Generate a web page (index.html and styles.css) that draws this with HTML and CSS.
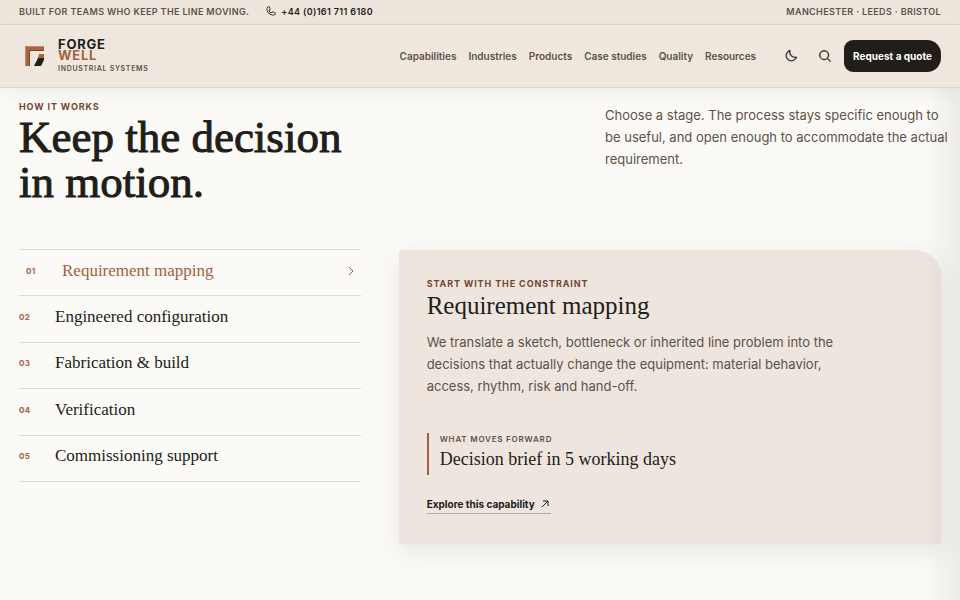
FILE: index.html
```
<!DOCTYPE html>
<html lang="en">
<head>
    <meta charset="UTF-8">
    <meta name="viewport" content="width=device-width, initial-scale=1">
    <title>Forgewell Industrial Systems</title>
    <link rel="stylesheet" href="styles.css">
</head>
<body>
<div class="topbar">
    <div class="topbar-left">
        <span>Built for teams who keep the line moving.</span>
        <a class="phone" href="tel:+441617116180">
            <svg width="12" height="12" viewBox="0 0 256 256" fill="currentColor" aria-hidden="true"><path d="M222.37,158.46l-47.11-21.11-.13-.06a16,16,0,0,0-15.17,1.4,8.12,8.12,0,0,0-.75.56L134.87,160c-15.42-7.49-31.34-23.29-38.83-38.51l20.78-24.71c.2-.25.39-.5.57-.77a16,16,0,0,0,1.32-15.06l0-.12L97.54,33.64a16,16,0,0,0-16.62-9.52A56.26,56.26,0,0,0,32,80c0,79.4,64.6,144,144,144a56.26,56.26,0,0,0,55.88-48.92A16,16,0,0,0,222.37,158.46ZM176,208A128.14,128.14,0,0,1,48,80,40.2,40.2,0,0,1,82.87,40a.61.61,0,0,0,0,.12l21,47L83.2,111.86a6.13,6.13,0,0,0-.57.77,16,16,0,0,0-1,15.7c9.06,18.53,27.73,37.06,46.46,46.11a16,16,0,0,0,15.75-1.14,8.44,8.44,0,0,0,.74-.56L168.89,152l47,21.05h0s.08,0,.11,0A40.21,40.21,0,0,1,176,208Z"/></svg>
            +44 (0)161 711 6180
        </a>
    </div>
    <span>Manchester · Leeds · Bristol</span>
</div>

<header class="header">
    <a class="brand" href="#">
        <svg class="brand-mark" width="20" height="20" viewBox="0 0 20 20" aria-hidden="true">
            <path fill="#a9633f" d="M0 0H19V5H5V20H0Z"/>
            <path fill="#c58b68" d="M0 0H19V1H1V20H0Z"/>
            <path fill="#7d4830" d="M4 4H19V5H5V20H4Z"/>
            <path fill="#a9633f" d="M14 8H19V12H13Z"/>
            <path fill="#231f19" d="M13 12H19V14L16 20H9Z"/>
        </svg>
        <span class="brand-text">
            <span class="brand-name">FORGE</span>
            <span class="brand-name accent">WELL</span>
            <span class="brand-sub">Industrial systems</span>
        </span>
    </a>
    <nav class="nav">
        <a href="#">Capabilities</a>
        <a href="#">Industries</a>
        <a href="#">Products</a>
        <a href="#">Case studies</a>
        <a href="#">Quality</a>
        <a href="#">Resources</a>
    </nav>
    <div class="actions">
        <button class="icon-btn" type="button" aria-label="Dark mode">
            <svg width="14" height="14" viewBox="0 0 256 256" fill="currentColor" stroke="currentColor" stroke-width="6"><path d="M233.54,142.23a8,8,0,0,0-8-2,88.08,88.08,0,0,1-109.8-109.8,8,8,0,0,0-10-10,104.84,104.84,0,0,0-52.91,37A104,104,0,0,0,136,224a103.09,103.09,0,0,0,62.52-20.88,104.84,104.84,0,0,0,37-52.91A8,8,0,0,0,233.54,142.23ZM188.9,190.34A88,88,0,0,1,65.66,67.11a89,89,0,0,1,31.4-26A106,106,0,0,0,96,56,104.11,104.11,0,0,0,200,160a106,106,0,0,0,14.92-1.06A89,89,0,0,1,188.9,190.34Z"/></svg>
        </button>
        <button class="icon-btn" type="button" aria-label="Search">
            <svg width="14" height="14" viewBox="0 0 256 256" fill="currentColor" stroke="currentColor" stroke-width="6"><path d="M229.66,218.34l-50.07-50.06a88.11,88.11,0,1,0-11.31,11.31l50.06,50.07a8,8,0,0,0,11.32-11.32ZM40,112a72,72,0,1,1,72,72A72.08,72.08,0,0,1,40,112Z"/></svg>
        </button>
        <button class="quote-btn" type="button">Request a quote</button>
    </div>
</header>

<main class="section">
    <div class="intro">
        <div>
            <p class="kicker">How it works</p>
            <h1>Keep the decision<br>in motion.</h1>
        </div>
        <p class="lead">Choose a stage. The process stays specific enough to<br>be useful, and open enough to accommodate the actual<br>requirement.</p>
    </div>

    <div class="process">
        <div class="stages">
            <button class="stage active" type="button">
                <span class="num">01</span>
                <span>Requirement mapping</span>
                <svg width="12" height="12" viewBox="0 0 12 12" fill="none" stroke="currentColor" aria-hidden="true"><path d="M4 2L8 6L4 10"/></svg>
            </button>
            <button class="stage" type="button"><span class="num">02</span><span>Engineered configuration</span></button>
            <button class="stage" type="button"><span class="num">03</span><span>Fabrication &amp; build</span></button>
            <button class="stage" type="button"><span class="num">04</span><span>Verification</span></button>
            <button class="stage" type="button"><span class="num">05</span><span>Commissioning support</span></button>
        </div>

        <article class="panel">
            <p class="kicker">Start with the constraint</p>
            <h2>Requirement mapping</h2>
            <p class="copy">We translate a sketch, bottleneck or inherited line problem into the decisions that actually change the equipment: material behavior, access, rhythm, risk and hand-off.</p>
            <div class="output">
                <span class="output-label">What moves forward</span>
                <strong>Decision brief in 5 working days</strong>
            </div>
            <a class="more" href="#">
                Explore this capability
                <svg width="8" height="8" viewBox="0 0 8 8" fill="none" stroke="currentColor" aria-hidden="true"><path d="M1 7L7 1M2 1H7V6"/></svg>
            </a>
        </article>
    </div>
</main>
<div class="edge-shadow"></div>
</body>
</html>
```
FILE: styles.css
```
:root {
    --ink: #211d19;
    --muted: #5c5249;
    --copper: #a3613f;
    --rust: #74452f;
    --sand: #eee5dd;
    --paper: #fbfaf6;
    --line: #dedbd5;
    --gutter: 19px;
    --sans: Inter, "Liberation Sans", sans-serif;
    --serif: "Liberation Serif", serif;
}

* {
    box-sizing: border-box;
    margin: 0;
    padding: 0;
}

body {
    background: var(--paper);
    color: var(--ink);
    font-family: var(--sans);
    min-height: 100vh;
    overflow-x: hidden;
}

a {
    color: inherit;
    text-decoration: none;
}

button {
    border: 0;
    background: none;
    color: inherit;
    font: inherit;
    cursor: pointer;
}

/* top bar */
.topbar {
    display: flex;
    justify-content: space-between;
    align-items: center;
    height: 25px;
    padding: 0 var(--gutter) 2px;
    background: var(--sand);
    border-bottom: 1px solid #dfd5cb;
    color: var(--muted);
    font-size: 9px;
    font-weight: 600;
    letter-spacing: 0.04em;
    text-transform: uppercase;
}

.topbar-left {
    display: flex;
    align-items: center;
    gap: 16px;
}

.phone {
    display: flex;
    align-items: center;
    gap: 4px;
    color: var(--ink);
}

/* header */
.header {
    position: relative;
    display: flex;
    align-items: center;
    height: 63px;
    padding: 0 var(--gutter);
    background: #efe7dd;
    border-bottom: 1px solid #ded5c9;
    box-shadow: 0 4px 16px rgba(40, 35, 25, 0.06);
}

.brand {
    display: flex;
    align-items: center;
    gap: 13px;
    padding-left: 6px;
}

.brand-text {
    display: flex;
    flex-direction: column;
}

.brand-name {
    font-size: 13px;
    font-weight: 700;
    line-height: 11px;
    letter-spacing: 0.06em;
}

.accent {
    color: var(--copper);
}

.brand-sub {
    margin-top: 4px;
    color: var(--muted);
    font-size: 7px;
    font-weight: 600;
    line-height: 8px;
    letter-spacing: 0.1em;
    text-transform: uppercase;
}

.nav {
    display: flex;
    gap: 12px;
    margin-left: auto;
    color: var(--muted);
    font-size: 10px;
    font-weight: 600;
}

.actions {
    display: flex;
    align-items: center;
    gap: 4px;
    margin-left: 20px;
}

.icon-btn {
    display: grid;
    place-items: center;
    width: 30px;
    height: 30px;
}

.quote-btn {
    height: 32px;
    padding: 0 9px;
    border-radius: 9px 14px 14px 9px;
    background: var(--ink);
    color: #fff;
    font-size: 10px;
    font-weight: 700;
}

/* how it works */
.section {
    padding: 13px var(--gutter) 56px;
}

.intro {
    display: grid;
    grid-template-columns: 1fr 336px;
    gap: 38px;
}

.kicker {
    color: var(--rust);
    font-size: 9px;
    font-weight: 700;
    line-height: 12px;
    letter-spacing: 0.1em;
    text-transform: uppercase;
}

h1 {
    margin-top: 2px;
    font-family: var(--serif);
    font-size: 45px;
    font-weight: 400;
    line-height: 45px;
    -webkit-text-stroke: 1px currentColor;
}

.lead,
.copy {
    color: var(--muted);
    font-size: 13px;
    line-height: 22px;
}

.lead {
    padding-top: 3px;
    white-space: nowrap;
}

.process {
    display: grid;
    grid-template-columns: 63fr 100fr;
    align-items: start;
    gap: 38px;
    margin-top: 44px;
}

.stages {
    display: grid;
    grid-template-rows: repeat(5, 1fr);
    min-height: 233px;
    border-top: 1px solid var(--line);
}

.stage {
    display: flex;
    align-items: center;
    gap: 12px;
    padding-bottom: 4px;
    border-bottom: 1px solid var(--line);
    font-family: var(--serif);
    font-size: 17px;
    text-align: left;
}

.stage.active {
    padding-left: 7px;
    padding-right: 4px;
    color: var(--copper);
}

.stage svg {
    margin-left: auto;
}

.num {
    width: 24px;
    color: var(--copper);
    font-family: var(--sans);
    font-size: 8px;
    font-weight: 700;
    letter-spacing: 0.04em;
}

.panel {
    margin-top: 1px;
    padding: 28px 28px 30px;
    border-radius: 2px 26px 2px 2px;
    background: #eee5df;
    box-shadow: 0 8px 24px rgba(60, 55, 35, 0.1);
}

h2 {
    margin-top: 2px;
    font-family: var(--serif);
    font-size: 25px;
    font-weight: 400;
    line-height: 28px;
}

.copy {
    max-width: 420px;
    margin-top: 11px;
}

.output {
    display: flex;
    flex-direction: column;
    gap: 2px;
    margin: 36px 0 17px;
    padding: 0 0 4px 11px;
    border-left: 2px solid var(--copper);
}

.output-label {
    color: var(--muted);
    font-size: 8px;
    font-weight: 600;
    line-height: 12px;
    letter-spacing: 0.1em;
    text-transform: uppercase;
}

.output strong {
    font-family: var(--serif);
    font-size: 18px;
    font-weight: 400;
    line-height: 24px;
}

.more {
    display: inline-flex;
    align-items: center;
    gap: 6px;
    padding-right: 2px;
    border-bottom: 1px solid #b5a89d;
    font-size: 10px;
    font-weight: 700;
    line-height: 18px;
}

/* soft shade along the right side of the window */
.edge-shadow {
    position: fixed;
    top: 88px;
    right: 0;
    bottom: 0;
    width: 36px;
    background: linear-gradient(to right, rgba(60, 60, 45, 0), rgba(60, 60, 45, 0.08));
    pointer-events: none;
}
```
